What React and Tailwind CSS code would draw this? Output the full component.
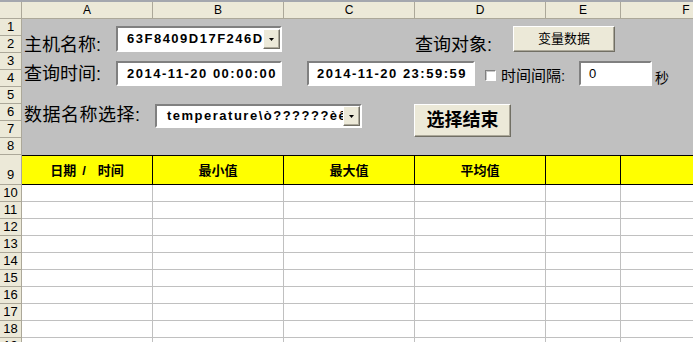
import React from "react";

function DropBtn() {
  return (
    <div className="flex h-full w-[17px] shrink-0 items-center justify-center border border-t-white border-l-white border-r-[#716f64] border-b-[#716f64] bg-[#ece9d8] shadow-[inset_-1px_-1px_0_#aca899]">
      <svg width="5" height="3" viewBox="0 0 5 3">
        <path d="M0 0h5L2.5 3z" fill="#000" />
      </svg>
    </div>
  );
}

const rowNums = [1, 2, 3, 4, 5, 6, 7, 8];
const lowRows = [10, 11, 12, 13, 14, 15, 16, 17, 18, 19];

function GridRow() {
  return (
    <div className="flex h-[17px] shrink-0 border-b border-[#c0c0c0] bg-white">
      <div className="w-[131px] shrink-0 border-r border-[#c0c0c0]" />
      <div className="w-[131px] shrink-0 border-r border-[#c0c0c0]" />
      <div className="w-[131px] shrink-0 border-r border-[#c0c0c0]" />
      <div className="w-[131px] shrink-0 border-r border-[#c0c0c0]" />
      <div className="w-[75px] shrink-0 border-r border-[#c0c0c0]" />
      <div className="w-[131px] shrink-0 border-r border-[#c0c0c0]" />
    </div>
  );
}

export default function App() {
  return (
    <div className="h-[342px] w-[693px] overflow-hidden bg-white font-['Liberation_Sans','Noto_Sans_CJK_SC',sans-serif] text-black">
      {/* top strip */}
      <div className="h-[2px] bg-[#a4a7ae]" />
      {/* column header */}
      <div className="flex h-[17px] border-b border-[#aca899] bg-[#ece9d8] text-[12px] leading-[16px]">
        <div className="w-[22px] shrink-0 border-r border-[#aca899]" />
        <div className="w-[131px] shrink-0 border-r border-[#aca899] text-center">A</div>
        <div className="w-[131px] shrink-0 border-r border-[#aca899] text-center">B</div>
        <div className="w-[131px] shrink-0 border-r border-[#aca899] text-center">C</div>
        <div className="w-[131px] shrink-0 border-r border-[#aca899] text-center">D</div>
        <div className="w-[75px] shrink-0 border-r border-[#aca899] text-center">E</div>
        <div className="w-[131px] shrink-0 border-r border-[#aca899] text-center">F</div>
      </div>

      <div className="flex">
        {/* row header */}
        <div className="flex w-[22px] shrink-0 flex-col border-r border-[#aca899] bg-[#ece9d8] text-[13px] leading-[16px]">
          {rowNums.map((n) => (
            <div key={n} className="h-[17px] shrink-0 border-b border-[#aca899] text-center">
              {n}
            </div>
          ))}
          <div className="flex h-[30px] shrink-0 items-end justify-center border-b border-[#aca899] pb-[1px]">9</div>
          {lowRows.map((n) => (
            <div key={n} className="h-[17px] shrink-0 border-b border-[#aca899] text-center">
              {n}
            </div>
          ))}
        </div>

        {/* sheet */}
        <div className="flex min-w-0 flex-1 flex-col">
          {/* grey control area, rows 1-8 */}
          <div className="flex h-[136px] shrink-0 flex-col bg-[#c0c0c0] pl-[2px]">
            {/* row A */}
            <div className="mt-[7px] flex h-[26px] items-start">
              <div className="w-[92px] shrink-0 pt-[6px] text-[18px] leading-[26px]">主机名称:</div>
              <div className="flex h-[26px] w-[166px] shrink-0 items-center overflow-hidden border-2 border-t-[#808080] border-l-[#808080] border-r-white border-b-white bg-white">
                <div className="min-w-0 flex-1 overflow-hidden whitespace-nowrap pl-[9px] text-[13px] font-bold tracking-[1.5px]">
                  63F8409D17F246D
                </div>
                <div className="h-[20px]">
                  <DropBtn />
                </div>
              </div>
              <div className="ml-[133px] w-[98px] shrink-0 pt-[6px] text-[18px] leading-[26px]">查询对象:</div>
              <div className="flex h-[26px] w-[102px] shrink-0 items-center justify-center border border-t-white border-l-white border-r-[#716f64] border-b-[#716f64] bg-[#ece9d8] text-[13px] shadow-[inset_-1px_-1px_0_#aca899]">
                变量数据
              </div>
            </div>

            {/* row B */}
            <div className="mt-[9px] flex h-[25px] items-center">
              <div className="w-[92px] shrink-0 pt-[2px] text-[18px] leading-[25px]">查询时间:</div>
              <div className="flex h-[25px] w-[166px] shrink-0 items-center overflow-hidden whitespace-nowrap border-2 border-t-[#808080] border-l-[#808080] border-r-white border-b-white bg-white pl-[9px] text-[13px] font-bold tracking-[1.5px]">
                2014-11-20 00:00:00
              </div>
              <div className="ml-[25px] flex h-[25px] w-[168px] shrink-0 items-center overflow-hidden whitespace-nowrap border-2 border-t-[#808080] border-l-[#808080] border-r-white border-b-white bg-white pl-[8px] text-[13px] font-bold tracking-[1.5px]">
                2014-11-20 23:59:59
              </div>
              <div className="ml-[10px] mt-[3px] h-[11px] w-[11px] shrink-0 border border-t-[#808080] border-l-[#808080] border-r-white border-b-white bg-white shadow-[inset_1px_1px_0_#c8c8c8]" />
              <div className="ml-[5px] w-[78px] shrink-0 pt-[3px] text-[15px] leading-[25px]">时间间隔:</div>
              <div className="flex h-[25px] w-[73px] shrink-0 items-center border-2 border-t-[#808080] border-l-[#808080] border-r-white border-b-white bg-white pl-[8px] text-[13px]">
                0
              </div>
              <div className="ml-[3px] shrink-0 pt-[9px] text-[14px] leading-[25px]">秒</div>
            </div>

            {/* row C */}
            <div className="mt-[18px] flex h-[24px] items-start">
              <div className="-mt-[2px] w-[131px] shrink-0 text-[18px] leading-[26px] tracking-[0.5px]">数据名称选择:</div>
              <div className="flex h-[24px] w-[207px] shrink-0 items-center overflow-hidden border-2 border-t-[#808080] border-l-[#808080] border-r-white border-b-white bg-white">
                <div className="min-w-0 flex-1 overflow-hidden whitespace-nowrap pl-[10px] text-[13px] font-bold tracking-[1.5px]">
                  {"temperature\\ò??????èêþ"}
                </div>
                <div className="h-[20px]">
                  <DropBtn />
                </div>
              </div>
              <div className="ml-[52px] flex h-[33px] w-[97px] shrink-0 items-center justify-center border border-t-white border-l-white border-r-[#716f64] border-b-[#716f64] bg-[#ece9d8] text-[18px] font-bold shadow-[inset_-1px_-1px_0_#aca899]">
                选择结束
              </div>
            </div>
          </div>

          {/* yellow header row 9 */}
          <div className="flex h-[30px] shrink-0 border-y border-black bg-[#ffff00] text-[13px] font-bold">
            <div className="flex w-[131px] shrink-0 items-center justify-center border-r border-black pt-[1px]">
              日期<span className="ml-[6px]">/</span>
              <span className="ml-[12px]">时间</span>
            </div>
            <div className="flex w-[131px] shrink-0 items-center justify-center border-r border-black pt-[1px]">最小值</div>
            <div className="flex w-[131px] shrink-0 items-center justify-center border-r border-black pt-[1px]">最大值</div>
            <div className="flex w-[131px] shrink-0 items-center justify-center border-r border-black pt-[1px]">平均值</div>
            <div className="w-[75px] shrink-0 border-r border-black" />
            <div className="w-[131px] shrink-0 border-r border-black" />
          </div>

          {lowRows.map((n) => (
            <GridRow key={n} />
          ))}
        </div>
      </div>
    </div>
  );
}
